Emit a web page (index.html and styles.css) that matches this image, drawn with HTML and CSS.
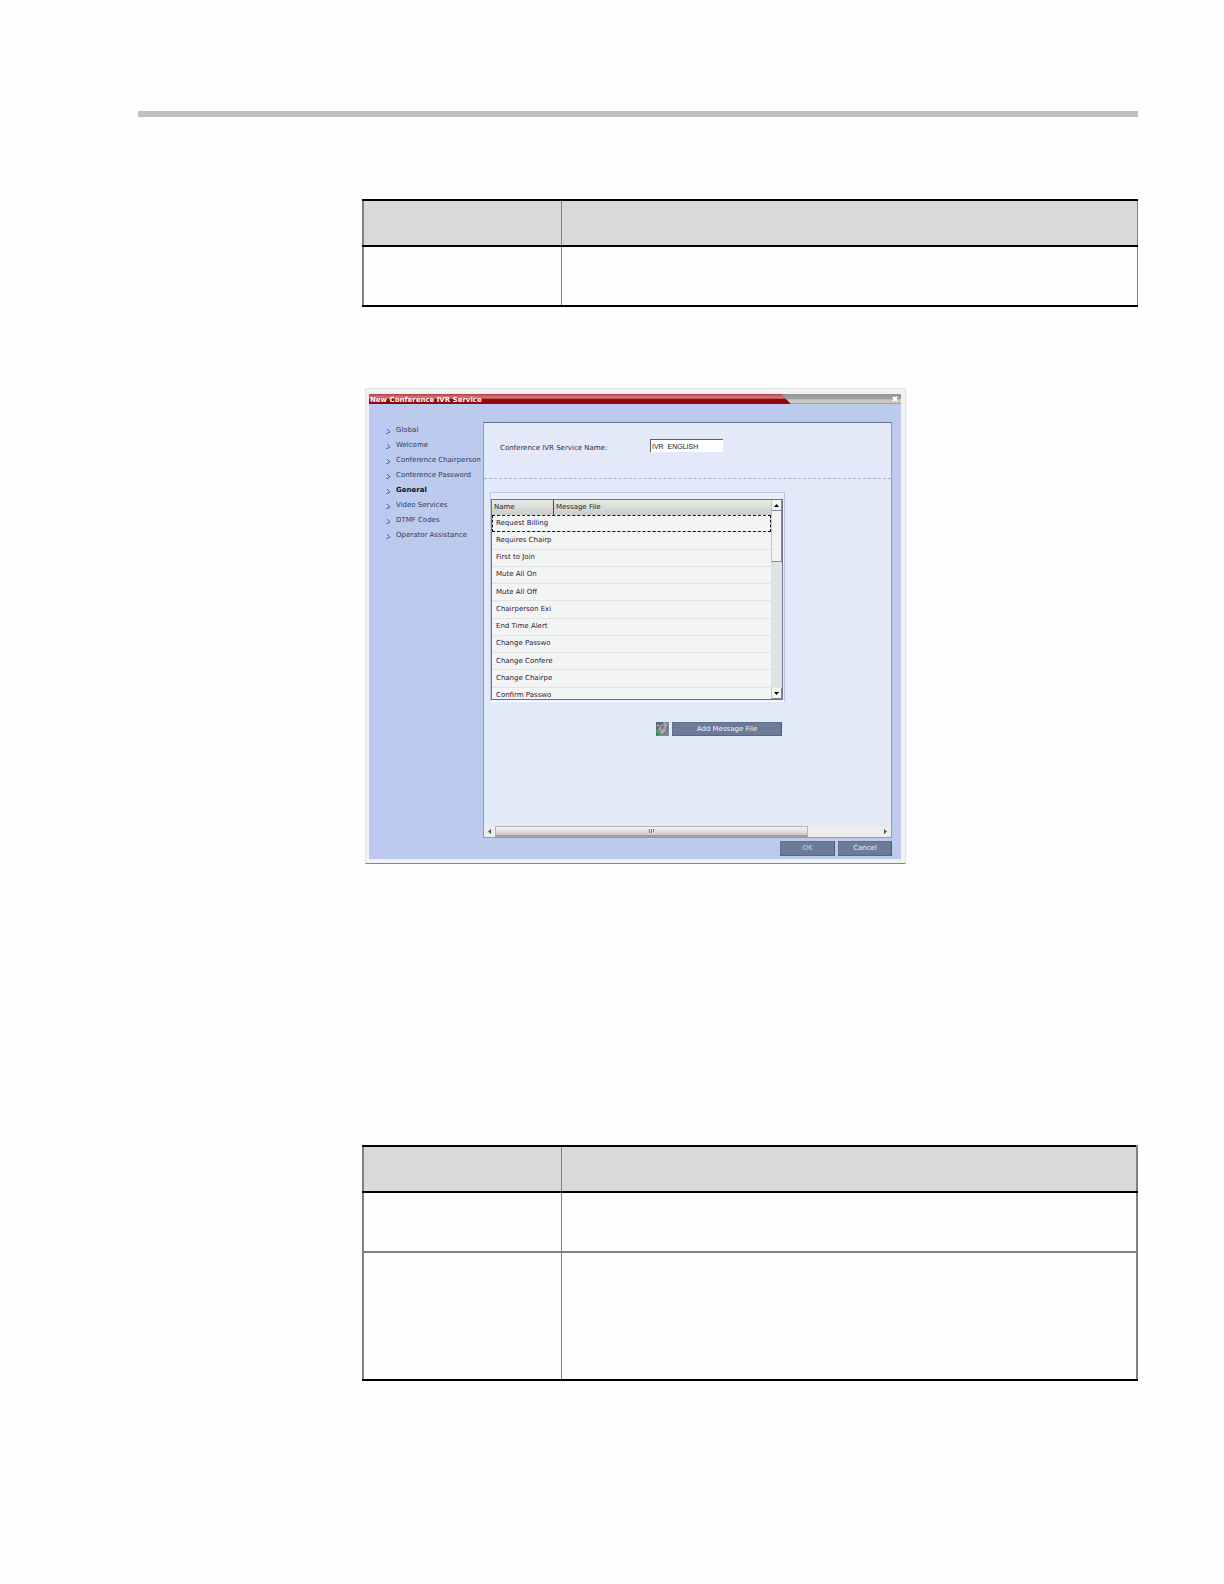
FILE: index.html
```html
<!DOCTYPE html>
<html lang="en">
<head>
    <meta charset="UTF-8">
    <meta name="viewport" content="width=device-width, initial-scale=1.0">
    <title>New Conference IVR Service</title>
    <link rel="stylesheet" href="styles.css">
</head>
<body>
    <div class="page">
        <hr class="rule">
        <main class="content">
            <table class="spec">
                <colgroup><col class="spec-field"><col></colgroup>
                <tr class="head"><th></th><th></th></tr>
                <tr class="short"><td></td><td></td></tr>
            </table>

            <section class="dialog">
                <header class="titlebar">
                    <h1>New Conference IVR Service</h1>
                    <div class="title-tab">
                        <button class="close" aria-label="Close">
                            <svg viewBox="0 0 6 6"><path d="M1 1L5 5M5 1L1 5"/></svg>
                        </button>
                    </div>
                </header>
                <div class="dialog-body">
                    <nav class="sidebar">
                        <a href="#"><svg viewBox="0 0 5 5"><path d="M1 0L4 3L0 5"/></svg>Global</a>
                        <a href="#"><svg viewBox="0 0 5 5"><path d="M1 0L4 3L0 5"/></svg>Welcome</a>
                        <a href="#"><svg viewBox="0 0 5 5"><path d="M1 0L4 3L0 5"/></svg>Conference Chairperson</a>
                        <a href="#"><svg viewBox="0 0 5 5"><path d="M1 0L4 3L0 5"/></svg>Conference Password</a>
                        <a href="#" class="active"><svg viewBox="0 0 5 5"><path d="M1 0L4 3L0 5"/></svg>General</a>
                        <a href="#"><svg viewBox="0 0 5 5"><path d="M1 0L4 3L0 5"/></svg>Video Services</a>
                        <a href="#"><svg viewBox="0 0 5 5"><path d="M1 0L4 3L0 5"/></svg>DTMF Codes</a>
                        <a href="#"><svg viewBox="0 0 5 5"><path d="M1 0L4 3L0 5"/></svg>Operator Assistance</a>
                    </nav>
                    <div class="main-col">
                        <div class="panel">
                            <div class="form-row">
                                <label for="serviceName">Conference IVR Service Name:</label>
                                <input type="text" id="serviceName" value="IVR_ENGLISH">
                            </div>
                            <div class="list-area">
                                <div class="list-frame">
                                    <div class="list">
                                        <div class="list-view">
                                            <table class="messages">
                                                <colgroup><col class="name-col"><col></colgroup>
                                                <thead>
                                                    <tr><th>Name</th><th>Message File</th></tr>
                                                </thead>
                                                <tbody>
                                                    <tr class="focused"><td>Request Billing</td><td></td></tr>
                                                    <tr><td>Requires Chairp</td><td></td></tr>
                                                    <tr><td>First to Join</td><td></td></tr>
                                                    <tr><td>Mute All On</td><td></td></tr>
                                                    <tr><td>Mute All Off</td><td></td></tr>
                                                    <tr><td>Chairperson Exi</td><td></td></tr>
                                                    <tr><td>End Time Alert</td><td></td></tr>
                                                    <tr><td>Change Passwo</td><td></td></tr>
                                                    <tr><td>Change Confere</td><td></td></tr>
                                                    <tr><td>Change Chairpe</td><td></td></tr>
                                                    <tr><td>Confirm Passwo</td><td></td></tr>
                                                </tbody>
                                            </table>
                                        </div>
                                        <div class="vscroll">
                                            <button aria-label="Scroll up"><svg viewBox="0 0 5 3"><path d="M0 3L2.5 0L5 3Z"/></svg></button>
                                            <div class="vthumb"></div>
                                            <button class="down" aria-label="Scroll down"><svg viewBox="0 0 5 3"><path d="M0 0L2.5 3L5 0Z"/></svg></button>
                                        </div>
                                    </div>
                                </div>
                                <div class="list-actions">
                                    <button class="sound" aria-label="Play message">
                                        <svg viewBox="0 0 13 14">
                                            <rect width="13" height="14" fill="#7d8a8e"/>
                                            <path d="M0 0H8L2 6L0 9Z" fill="#59666c"/>
                                            <path d="M4 3L8 2L9 5L8 9L5 10L3 7Z" fill="#9aa6aa"/>
                                            <path d="M5 4L8 3L7 7L5 7Z" fill="#6c7980"/>
                                            <path d="M8 1Q12 4 9 9L5 11" fill="none" stroke="#cfd8da"/>
                                            <path d="M11 4Q12 9 8 12" fill="none" stroke="#56636a"/>
                                            <path d="M1 4L3 3" fill="none" stroke="#e4ecec"/>
                                            <path d="M0 10L4 12L0 14Z" fill="#159a32"/>
                                        </svg>
                                    </button>
                                    <button class="btn add">Add Message File</button>
                                </div>
                            </div>
                            <div class="hscroll">
                                <button aria-label="Scroll left"><svg viewBox="0 0 3 5"><path d="M3 0L0 2.5L3 5Z"/></svg></button>
                                <div class="hthumb"><svg viewBox="0 0 5 4"><path d="M.5 0V4M2.5 0V4M4.5 0V3"/></svg></div>
                                <button class="right" aria-label="Scroll right"><svg viewBox="0 0 3 5"><path d="M0 0L3 2.5L0 5Z"/></svg></button>
                            </div>
                        </div>
                        <footer class="dialog-actions">
                            <button class="btn ok">OK</button>
                            <button class="btn">Cancel</button>
                        </footer>
                    </div>
                </div>
            </section>

            <table class="spec spec-wide">
                <colgroup><col class="spec-field"><col></colgroup>
                <tr class="head"><th></th><th></th></tr>
                <tr class="short"><td></td><td></td></tr>
                <tr class="tall"><td></td><td></td></tr>
            </table>
        </main>
    </div>
</body>
</html>
```
FILE: styles.css
```css
* {
    box-sizing: border-box;
}

body {
    margin: 0;
    background-color: #fefefe;
    font-family: "DejaVu Sans", Verdana, sans-serif;
    font-size: 7px;
    line-height: 9px;
    color: #2c2c40;
}

button,
input {
    margin: 0;
    padding: 0;
    border: 0;
    font: inherit;
    color: inherit;
}

svg {
    display: block;
}

.page {
    padding: 111px 86px 80px 138px;
}

.rule {
    height: 6px;
    margin: 0;
    border: 0;
    background-color: #c0c0c0;
}

.content {
    margin: 82px 0 0 224px;
}

/* Document tables */
.spec {
    width: 100%;
    table-layout: fixed;
    border-collapse: collapse;
    border: 2px solid #808080;
    border-right-width: 1px;
    border-top-color: #000;
    border-bottom-color: #000;
}

.spec-wide {
    margin-top: 281px;
    border-right-width: 2px;
}

.spec-field {
    width: 198px;
}

.spec th,
.spec td {
    padding: 0;
}

.spec th + th,
.spec td + td {
    border-left: 1px solid #808080;
}

.spec .head {
    height: 46px;
    background-color: #d9d9d9;
    border-bottom: 2px solid #000;
}

.spec .short {
    height: 60px;
}

.spec .tall {
    height: 128px;
    border-top: 2px solid #808080;
}

/* Dialog */
.dialog {
    max-width: 541px;
    margin: 81px 0 0 3px;
    padding: 5px 4px 4px 3px;
    background-color: #f1f2f2;
    border: 1px solid #e2e2e2;
    border-bottom-color: #858585;
}

.titlebar {
    display: flex;
    height: 10px;
    background: linear-gradient(#b8383c, #d2777a 30%, #c25055 48%, #930609 52%, #930609);
}

.titlebar h1 {
    flex: 1;
    margin: 0;
    padding-left: 1px;
    font-size: 7px;
    line-height: 12px;
    color: #fff;
}

.title-tab {
    display: flex;
    justify-content: flex-end;
    width: 120px;
    padding-right: 3px;
    background: linear-gradient(#949494, #a2a2a2 45%, #c8c6c1 60%, #cfc9c4 90%, #a66);
    clip-path: polygon(0 0, 100% 0, 100% 100%, 10px 100%);
}

.close {
    background: none;
}

.close svg {
    width: 6px;
    height: 6px;
    fill: none;
    stroke: #fff;
    stroke-width: 2;
}

.dialog-body {
    display: flex;
    min-height: 455px;
    background: linear-gradient(90deg, #bbc6f2, #bccaee 4%, #bccaee 97%, #b9cdea 98%, #bfc9f3);
}

.sidebar {
    display: flex;
    flex-direction: column;
    flex: 0 0 114px;
    padding: 19px 0 0 17px;
}

.sidebar a {
    display: flex;
    align-items: center;
    gap: 5px;
    height: 15px;
    color: #303a5e;
    text-decoration: none;
    white-space: nowrap;
}

.sidebar svg {
    width: 5px;
    height: 5px;
    margin-top: 1px;
    fill: none;
    stroke: #2a68c8;
    stroke-width: 1;
}

.sidebar .active {
    font-weight: bold;
    color: #111;
}

.main-col {
    display: flex;
    flex-direction: column;
    flex: 1;
    min-width: 0;
    padding: 18px 9px 3px 0;
}

.panel {
    display: flex;
    flex-direction: column;
    flex: 1;
    border: 1px solid #8f9bb0;
    border-top-color: #66708c;
    background: linear-gradient(90deg, #e1ebfa, #e3e9f9 4%);
}

.form-row {
    display: flex;
    align-items: flex-start;
    height: 56px;
    padding: 16px 0 0 16px;
    border-bottom: 1px dashed #a9b3c8;
}

.form-row label {
    width: 150px;
    padding-top: 5px;
}

.form-row input {
    width: 73px;
    height: 13px;
    padding-left: 1px;
    background-color: #fff;
    border-top: 1px solid #5b6070;
    border-left: 1px solid #5b6070;
    font-family: "Liberation Sans", Arial, sans-serif;
    color: #222;
}

.list-area {
    max-width: 301px;
    padding: 13px 0 0 6px;
}

.list-frame {
    padding: 6px 1px 1px 0;
    border: 1px solid #b9c6de;
    border-bottom-color: #fff;
    background-color: #e9f0fc;
}

.list {
    display: flex;
    height: 201px;
    border: 1px solid #6a7390;
    background-color: #f3f4f4;
}

.list-view {
    flex: 1;
    min-width: 0;
    overflow: hidden;
}

.messages {
    width: 100%;
    height: 205px;
    table-layout: fixed;
    border-collapse: separate;
    border-spacing: 0;
    color: #2b1838;
}

.name-col {
    width: 62px;
}

.messages th {
    height: 15px;
    padding: 0 2px;
    background: linear-gradient(#e9ebe9, #c9ccc9);
    font-weight: normal;
    text-align: left;
    color: #262830;
}

.messages th:first-child {
    border-right: 1px solid #444a55;
}

.messages td {
    padding: 0 0 0 4px;
    border-bottom: 1px solid #e2e4e4;
    white-space: nowrap;
}

.messages .focused {
    outline: 1px dashed #111;
    outline-offset: -1px;
}

.vscroll {
    display: flex;
    flex-direction: column;
    width: 11px;
    background-color: #e0e4e1;
}

.vscroll button,
.vthumb {
    background-color: #f3f4f2;
    border-left: 1px solid #c5c8c5;
    border-right: 1px solid #858994;
    border-bottom: 1px solid #858994;
}

.vscroll button,
.hscroll button {
    display: flex;
    align-items: center;
    justify-content: center;
}

.vscroll button {
    height: 11px;
}

.vscroll svg {
    width: 5px;
    height: 3px;
}

.vthumb {
    height: 51px;
}

.vscroll .down {
    margin-top: auto;
}

.list-actions {
    display: flex;
    justify-content: flex-end;
    align-items: flex-end;
    gap: 3px;
    margin-top: 20px;
    padding-right: 3px;
}

.sound svg {
    width: 13px;
    height: 14px;
}

.btn {
    width: 54px;
    height: 15px;
    background-color: #6b7b98;
    border: 1px solid #63718d;
    border-right-color: #4f5c75;
    border-bottom-color: #59677f;
    color: #eef2f8;
}

.btn.add {
    width: 110px;
    height: 14px;
}

.btn.ok {
    width: 55px;
    color: #c9d2df;
}

.hscroll {
    display: flex;
    height: 11px;
    margin-top: auto;
    background-color: #eeeded;
}

.hscroll button {
    width: 11px;
    background: none;
}

.hscroll button svg {
    width: 3px;
    height: 5px;
    fill: #555;
}

.hscroll .right {
    margin-left: auto;
}

.hthumb {
    display: flex;
    align-items: center;
    justify-content: center;
    width: 77%;
    border: 1px solid #b5b5b8;
    border-bottom: 2px solid #a19e9f;
    background: linear-gradient(#f3f3f1, #e4e2e2 50%, #c9c4ca);
}

.hthumb svg {
    width: 5px;
    height: 4px;
    stroke: #777;
}

.dialog-actions {
    display: flex;
    justify-content: flex-end;
    gap: 3px;
    padding-top: 3px;
}
```
